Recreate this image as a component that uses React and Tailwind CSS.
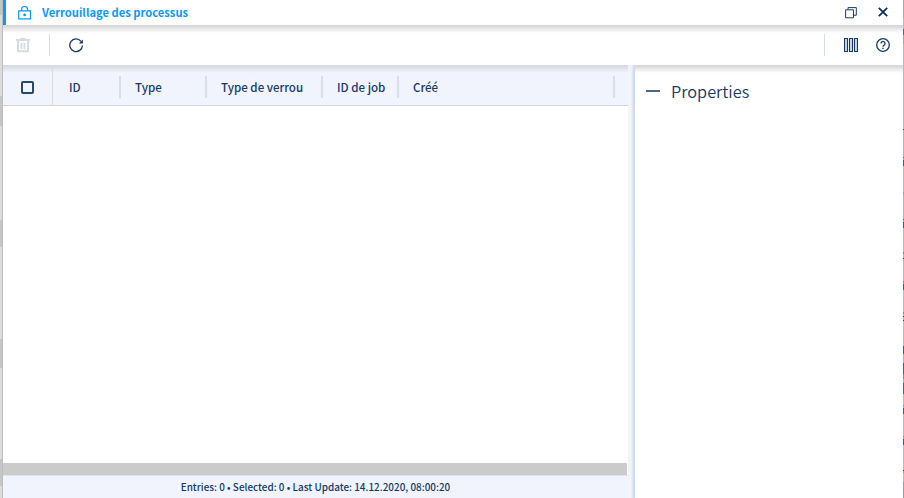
import React from 'react';

const leftEdge = [
  [15, 'bg-[#c4c4c4]'], [81, 'bg-[#dcdcdc]'], [30, 'bg-[#c6c6c6]'], [94, 'bg-[#dcdcdc]'], [27, 'bg-[#c6c6c6]'],
  [92, 'bg-[#dcdcdc]'], [29, 'bg-[#c6c6c6]'], [91, 'bg-[#dcdcdc]'], [27, 'bg-[#c6c6c6]'], [12, 'bg-[#dcdcdc]'],
];

const rightEdge = [
  [18, 'bg-[#a9a9a9]'], [11, 'bg-[#b9b9b9]'], [6, 'bg-[#566582]'], [9, 'bg-[#a4a4a4]'], [85, 'bg-[#b9b9bb]'],
  [1, 'bg-[#55545a]'], [27, 'bg-[#b3b3b5]'], [1, 'bg-[#625f88]'], [2, 'bg-[#8fb0c8]'], [6, 'bg-[#176a96]'],
  [26, 'bg-[#b9b9bb]'], [3, 'bg-[#6fb0bd]'], [24, 'bg-[#b3b3b5]'], [1, 'bg-[#625f88]'], [2, 'bg-[#8fb0c8]'],
  [6, 'bg-[#176a96]'], [24, 'bg-[#b9b9bb]'], [2, 'bg-[#88888c]'], [4, 'bg-[#b3b3b5]'], [1, 'bg-[#4b4b50]'],
  [22, 'bg-[#b9b9bb]'], [2, 'bg-[#6f90ac]'], [1, 'bg-[#8fb0c8]'], [6, 'bg-[#176a96]'], [22, 'bg-[#b9b9bb]'],
  [2, 'bg-[#88888c]'], [2, 'bg-[#b9b9bb]'], [1, 'bg-[#44444a]'], [3, 'bg-[#b9b9bb]'], [1, 'bg-[#44444a]'],
  [25, 'bg-[#b9b9bb]'], [8, 'bg-[#176a96]'], [9, 'bg-[#b3b3b5]'], [11, 'bg-[#1b73a3]'], [5, 'bg-[#7f7fba]'],
  [4, 'bg-[#9fa6cc]'], [11, 'bg-[#1b73a3]'], [11, 'bg-[#b9b9bb]'], [1, 'bg-[#6f90ac]'], [2, 'bg-[#8fb0c8]'],
  [6, 'bg-[#176a96]'], [22, 'bg-[#b9b9bb]'], [1, 'bg-[#6f90ac]'], [2, 'bg-[#8fb0c8]'], [6, 'bg-[#176a96]'],
  [25, 'bg-[#b9b9bb]'], [1, 'bg-[#633c55]'], [2, 'bg-[#b59a80]'], [9, 'bg-[#b9b9bb]'], [16, 'bg-[#9c9c9e]'],
];

function Edge({ parts }) {
  return (
    <>
      {parts.map(([height, color], i) => (
        <div key={i} className={'shrink-0 ' + color} style={{ height }} />
      ))}
    </>
  );
}

const columns = [
  { label: 'ID', width: 'w-[68px]', inset: 'pl-4' },
  { label: 'Type', width: 'w-[86px]', inset: 'pl-[14px]' },
  { label: 'Type de verrou', width: 'w-[116px]', inset: 'pl-[14px]' },
  { label: 'ID de job', width: 'w-[76px]', inset: 'pl-[14px]' },
  { label: 'Créé', width: 'w-[216px]', inset: 'pl-[14px]' },
];

function TitleBar() {
  return (
    <header className="flex h-[25px] shrink-0 items-center border-l-[3px] border-[#0a99f2] bg-white">
      <svg className="ml-3 h-[14px] w-[14px] shrink-0" viewBox="0 0 14 14" fill="none" stroke="#0a99f2">
        <path d="M.7 4.900h11.800v8H.7z" strokeWidth="1.2" />
        <path d="M3.600 4.800V3.500a3 3 0 0 1 6 0v1.300" strokeWidth="1.200" />
        <circle cx="6.600" cy="8.900" r="1.400" fill="#0a99f2" stroke="none" />
      </svg>
      <h1 className="-mt-px ml-[10px] whitespace-nowrap text-[11.2px] font-bold leading-[24px] text-[#0a99f2]">
        Verrouillage des processus
      </h1>
      <svg className="ml-auto mr-[21px] h-3 w-3" viewBox="0 0 12 12" fill="none" stroke="#1b3d66">
        <path d="M.600 2.800h7.900v8H.600z" />
        <path d="M3 2.700V.600h8.300v7.600H8.600" />
      </svg>
      <svg className="-mt-px mr-[15px] h-[10px] w-[10px]" viewBox="0 0 10 10" stroke="#062e5c" strokeWidth="1.7">
        <path d="M.8.8l8.400 8.400M9.200.8L.8 9.200" />
      </svg>
    </header>
  );
}

function Toolbar() {
  return (
    <div className="flex h-10 shrink-0 items-center bg-white bg-linear-to-b from-[#d3d3d3] to-white bg-[length:100%_8px] bg-no-repeat">
      <svg className="ml-[13px] h-[15px] w-[15px]" viewBox="0 0 15 15" fill="none" stroke="#d5dce4">
        <path d="M0 2h14M4.500 1h5" strokeWidth="2" />
        <path d="M2 2.500v10.800h10V2.500" strokeWidth="2" />
        <path d="M5.500 4.800v6.200M8.500 4.800v6.200" strokeWidth="1.800" />
      </svg>
      <div className="ml-[18px] h-[22px] w-px bg-[#dddddd]" />
      <svg className="ml-[19px] h-[15px] w-[15px]" viewBox="0 0 15 15" fill="none" stroke="#153a66" strokeWidth="1.300">
        <path d="M13.400 7.400A6.300 6.300 0 1 1 12 3.300" />
        <path d="M13.900 1.500v4H9.900z" fill="#153a66" stroke="none" />
      </svg>
      <div className="ml-auto h-[22px] w-px bg-[#d5dde5]" />
      <svg className="ml-[19px] h-[14px] w-[14px]" viewBox="0 0 14 14" fill="#d3dbe3" stroke="#153a66" strokeWidth="1.100">
        <path d="M.5.5h3v13h-3zM5.500.5h3v13h-3zM10.500.5h3v13h-3z" />
      </svg>
      <svg className="ml-[18px] mr-[13px] h-[14px] w-[14px]" viewBox="0 0 14 14" fill="none" stroke="#153a66">
        <circle cx="7" cy="7" r="6.300" strokeWidth="1.300" />
        <path d="M5 5.500a2 2 0 1 1 3.200 1.600C7.400 7.600 7 7.900 7 8.700" strokeWidth="1.300" />
        <path d="M7 9.700v1.400" strokeWidth="1.400" />
      </svg>
    </div>
  );
}

function Table() {
  return (
    <section className="flex w-[625px] flex-col bg-white">
      <div className="flex h-[41px] shrink-0 border-b border-[#cfd4da] bg-[#f1f4fd] bg-linear-to-b from-[#d4d7df] to-[#f1f4fd] bg-[length:100%_8px] bg-no-repeat">
        <div className="flex w-[50px] items-start border-r border-[#dddde0] pl-[18px] pt-4">
          <div className="h-[13px] w-[13px] rounded-[2px] border-2 border-[#26486f]" />
        </div>
        {columns.map((c) => (
          <div key={c.label} className={'flex shrink-0 items-start pt-[11px] ' + c.width + ' ' + c.inset}>
            <span className="-mt-px whitespace-nowrap text-[11.550px] font-medium leading-[24px] text-[#153a66]">{c.label}</span>
            <div className="ml-auto h-[22px] w-[2px] shrink-0 bg-[#d8dfe7]" />
          </div>
        ))}
      </div>
      <div className="flex-1" />
      <div className="mr-px h-3 shrink-0 bg-[#cbcbcb]" />
      <footer className="flex h-[23px] shrink-0 items-center justify-center border-t border-[#dde3ea] bg-[#f1f4fd]">
        <span className="whitespace-nowrap text-[9.920px] font-medium leading-5 text-[#153a66]">
          Entries: 0 • Selected: 0 • Last Update: 14.12.2020, 08:00:20
        </span>
      </footer>
    </section>
  );
}

export default function App() {
  return (
    <div className="flex h-[498px] w-[904px] overflow-hidden bg-white font-['Noto_Sans_CJK_JP',sans-serif]">
      <div className="flex w-[3px] shrink-0 flex-col border-r border-[#bdbdbd]">
        <Edge parts={leftEdge} />
      </div>
      <main className="flex w-[900px] shrink-0 flex-col">
        <TitleBar />
        <Toolbar />
        <div className="flex flex-1">
          <Table />
          <div className="w-[7px] bg-linear-to-r from-[#f1f4fc] from-40% to-[#c9d5e8]" />
          <aside className="flex flex-1 items-start bg-white bg-linear-to-b from-[#d3d3d3] to-white bg-[length:100%_8px] bg-no-repeat">
            <div className="ml-[11px] mt-[25px] h-[2px] w-[14px] bg-[#4a678a]" />
            <h2 className="ml-[11px] mt-3 text-[16.350px] font-[350] leading-7 text-[#153a66]">Properties</h2>
          </aside>
        </div>
      </main>
      <div className="flex w-px shrink-0 flex-col">
        <Edge parts={rightEdge} />
      </div>
    </div>
  );
}
